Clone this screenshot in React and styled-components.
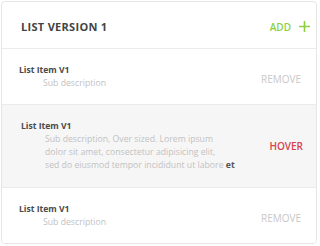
import React from 'react'
import styled, { createGlobalStyle } from 'styled-components'

const GlobalStyle = createGlobalStyle`
  body {
    margin: 0;
    background: #ffffff;
    font-family: "Open Sans", "Liberation Sans", sans-serif;
  }
`

const Card = styled.div`
  margin: 1px 0 0 1px;
  width: 314px;
  border: 1px solid #e6e6e6;
  border-radius: 4px;
  background: #fff;
  overflow: hidden;
`

const Header = styled.div`
  height: 47px;
  display: flex;
  align-items: center;
  justify-content: space-between;
  padding: 3px 6px 0 19px;
  box-sizing: border-box;
  border-bottom: 1px solid #ebebeb;
`

const Title = styled.h2`
  margin: 0;
  font-size: 11px;
  font-weight: 700;
  letter-spacing: 0.3px;
  color: #444;
`

const AddButton = styled.button`
  display: flex;
  align-items: center;
  gap: 8px;
  border: 0;
  background: none;
  padding: 0;
  font-family: inherit;
  font-size: 10px;
  font-weight: 600;
  color: #8ccf3f;
  cursor: pointer;
`

const Row = styled.div`
  display: flex;
  align-items: center;
  justify-content: space-between;
  padding: ${p => (p.$hover ? '15px 13px 15px 19px' : '15px 15px 14px 17px')};
  background: ${p => (p.$hover ? '#f6f6f6' : '#fff')};
  border-bottom: 1px solid #ebebeb;

  &:last-child {
    border-bottom: 0;
  }
`

const ItemName = styled.div`
  font-size: 8.6px;
  font-weight: 700;
  line-height: 13px;
  color: #4a4a4a;
`

const Sub = styled.div`
  margin-left: 24px;
  font-size: 8.7px;
  line-height: 13px;
  color: #c2c2c2;
  white-space: nowrap;

  strong {
    color: #555;
    font-weight: 700;
  }
`

const Action = styled.span`
  font-size: 10px;
  font-weight: ${p => (p.$hover ? 600 : 400)};
  color: ${p => (p.$hover ? '#d6434e' : '#c8c8c8')};
  margin-top: ${p => (p.$hover ? '0' : '3px')};
`

const Plus = () => (
  <svg width="11" height="11" viewBox="0 0 11 11">
    <path d="M5.5 0v11M0 5.5h11" stroke="#8ccf3f" strokeWidth="1.6" />
  </svg>
)

export default function App() {
  return (
    <>
      <GlobalStyle />
      <Card>
        <Header>
          <Title>LIST VERSION 1</Title>
          <AddButton>
            ADD <Plus />
          </AddButton>
        </Header>
        <Row>
          <div>
            <ItemName>List Item V1</ItemName>
            <Sub>Sub description</Sub>
          </div>
          <Action>REMOVE</Action>
        </Row>
        <Row $hover>
          <div>
            <ItemName>List Item V1</ItemName>
            <Sub>
              Sub description, Over sized. Lorem ipsum
              <br />
              dolor sit amet, consectetur adipisicing elit,
              <br />
              sed do eiusmod tempor incididunt ut labore <strong>et</strong>
            </Sub>
          </div>
          <Action $hover>HOVER</Action>
        </Row>
        <Row>
          <div>
            <ItemName>List Item V1</ItemName>
            <Sub>Sub description</Sub>
          </div>
          <Action>REMOVE</Action>
        </Row>
      </Card>
    </>
  )
}
